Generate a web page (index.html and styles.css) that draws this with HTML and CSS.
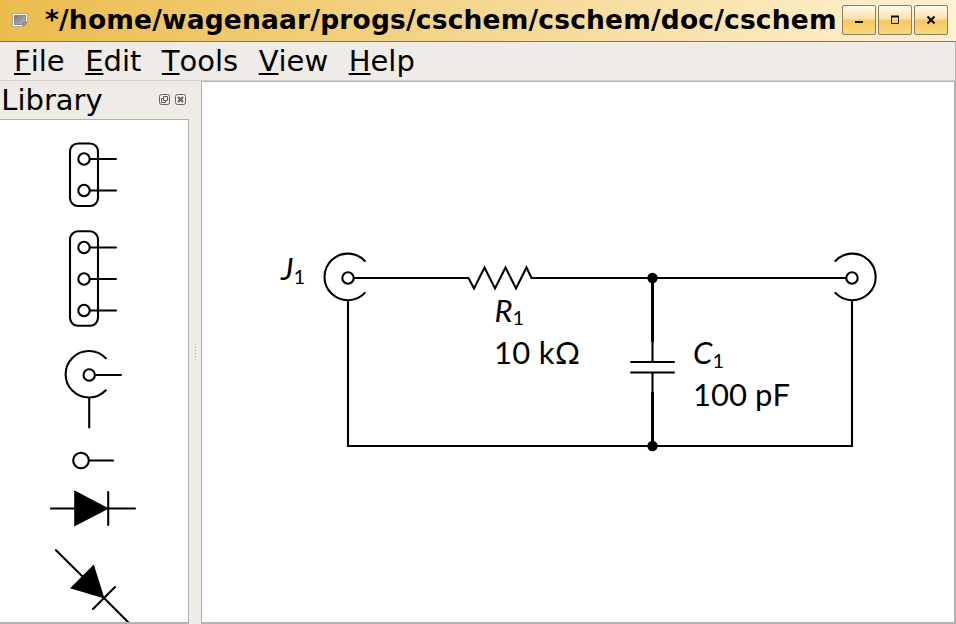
FILE: index.html
```html
<!DOCTYPE html>
<html lang="en">
<head>
<meta charset="utf-8">
<title>cschem</title>
<link rel="stylesheet" href="styles.css">
</head>
<body>
<div class="window">
  <header class="titlebar">
    <svg class="app-icon" width="16" height="14" viewBox="0 0 16 14"><defs><linearGradient id="ig" x2="1" y2="1"><stop stop-color="#777"/><stop offset="1" stop-color="#bbb"/></linearGradient></defs><path d="M.5.5h15v9l-4 4h-11z" fill="#f5f5f5" stroke="#aaa"/><path d="M2.500 2.500h11v6.500l-3 2.500h-8z" fill="url(#ig)" stroke="#888"/><path d="M15 9.500l-4 3.500v-3z" fill="#ccc" stroke="#777"/></svg>
    <h1 class="title">*/home/wagenaar/progs/cschem/cschem/doc/cschem</h1>
    <div class="controls">
      <button class="control" aria-label="Minimize"><svg width="12" height="12" viewBox="0 0 12 12"><path d="M2 8h8" stroke="#111" stroke-width="2"/></svg></button>
      <button class="control" aria-label="Maximize"><svg width="12" height="12" viewBox="0 0 12 12"><path d="M2.500 2.500h7v7h-7z" fill="none" stroke="#222"/><path d="M2 2.500h8" stroke="#111" stroke-width="2"/></svg></button>
      <button class="control" aria-label="Close"><svg width="12" height="12" viewBox="0 0 12 12"><path d="M2.500 2.500l7 7m0-7l-7 7" stroke="#111" stroke-width="2.200"/></svg></button>
    </div>
  </header>
  <nav class="menubar">
    <span class="menu"><span class="key">F</span>ile</span>
    <span class="menu"><span class="key">E</span>dit</span>
    <span class="menu"><span class="key">T</span>ools</span>
    <span class="menu"><span class="key">V</span>iew</span>
    <span class="menu"><span class="key">H</span>elp</span>
  </nav>
  <div class="workspace">
    <aside class="library">
      <div class="dock-title">
        <span class="dock-name">Library</span>
        <svg class="dock-button" width="11" height="11" viewBox="0 0 11 11"><rect x=".5" y=".5" width="10" height="10" rx="2"/><path d="M4.500 2.500h4v4h-4zM4.500 4.500h-2v4h4v-2"/></svg>
        <svg class="dock-button" width="11" height="11" viewBox="0 0 11 11"><rect x=".5" y=".5" width="10" height="10" rx="2"/><path d="M3 3l5 5m0-5l-5 5" stroke-width="2"/></svg>
      </div>
      <svg class="parts" width="188" height="502" viewBox="0 120 188 502">
        <g class="ink">
          <rect x="70" y="143.500" width="28" height="62.500" rx="8"/>
          <circle cx="84" cy="159" r="5.700"/><path d="M90 159h26"/>
          <circle cx="84" cy="190.500" r="5.700"/><path d="M90 190.500h26"/>
          <rect x="70" y="231.300" width="28" height="94.500" rx="8"/>
          <circle cx="84" cy="247.500" r="5.700"/><path d="M90 247.500h26"/>
          <circle cx="84" cy="279" r="5.700"/><path d="M90 279h26"/>
          <circle cx="84" cy="310.500" r="5.700"/><path d="M90 310.500h26"/>
          <path d="M105.800 358.200A23.300 23.300 0 1 0 105.800 390.300M89.200 398v29.500M95 375h26"/>
          <circle cx="89.200" cy="375" r="5.700"/>
          <circle cx="81" cy="460.500" r="7.800"/><path d="M89 460.500h24"/>
          <path d="M51 508.500h25M108 508.500h27M108.200 492v33"/>
          <path d="M56 550.200L82 576M93 609l22-22M104 598l28 28"/>
        </g>
        <path d="M74.200 490.200v36.200l34.800-17.900zM93.800 564.500l-23.800 23.800 34.500 10.200z"/>
      </svg>
    </aside>
    <div class="splitter"><span class="grip"></span></div>
    <main class="canvas">
      <svg width="752" height="540" viewBox="202 82 752 540">
        <g class="ink">
          <path d="M364.800 261A23.300 23.300 0 1 0 364.800 292.900M835.400 261A23.300 23.300 0 1 1 835.400 292.900"/>
          <circle cx="348" cy="278" r="5.700"/><circle cx="852" cy="278" r="5.700"/>
          <path stroke-linejoin="miter" d="M354 278H468.500L474 288.500 484.500 267.500 495 288.500 505.500 267.500 516 288.500 526.500 267.500 531.500 278H846M348 301V446H852V301"/>
          <path d="M652.500 342v20M652.500 373v19"/>
          <path class="plate" d="M630.300 362h44.500M630.300 372.500h44.500"/>
          <path class="bus" d="M652.500 278v64M652.500 392v54"/>
        </g>
        <circle cx="652.500" cy="278" r="5.200"/><circle cx="652.500" cy="446" r="5.200"/>
        <g class="label">
          <text x="281" y="280" class="name">J</text><text x="293.500" y="284" class="sub">1</text>
          <text x="494.500" y="322" class="name">R</text><text x="512.500" y="325" class="sub">1</text>
          <text x="494" y="364" textLength="86">10 kΩ</text>
          <text x="693" y="364" class="name">C</text><text x="712.500" y="368" class="sub">1</text>
          <text x="693" y="406" textLength="97">100 pF</text>
        </g>
      </svg>
    </main>
  </div>
</div>
</body>
</html>
```
FILE: styles.css
```css
* { box-sizing: border-box; }
body { margin: 0; background: #efebe7; color: #000; font-family: "DejaVu Sans", sans-serif; font-kerning: none; }
.window { display: flex; flex-direction: column; width: 956px; height: 624px; overflow: hidden; }
.titlebar { display: flex; flex: none; align-items: center; height: 42px; padding: 0 8px 1px 12px; border-bottom: 1px solid #927638; background: linear-gradient(90deg, #ebbc4c, #fff1d4); }
.app-icon { flex: none; margin-right: 17px; }
.title { flex: 1; margin: 0; font-size: 26.500px; letter-spacing: 0.165px; line-height: 40px; font-weight: bold; white-space: nowrap; }
.controls { display: flex; flex: none; gap: 2px; }
.control { display: flex; align-items: center; justify-content: center; width: 34px; height: 30px; padding: 0; border: 1px solid #8d7d61; border-radius: 2px; background: linear-gradient(#fffaf0, #f9e2aa 45%, #f4c965 52%, #f9d778); }
.menubar { display: flex; flex: none; gap: 20.500px; height: 39px; padding-left: 14px; border-bottom: 1px solid #d2cecb; border-right: 1px solid #b5b1ae; font-size: 29px; line-height: 38px; }
.key { text-decoration: underline; text-decoration-thickness: 2px; text-underline-offset: 2px; text-decoration-skip-ink: none; }
.workspace { display: flex; flex: 1; min-height: 0; }
.library { display: flex; flex-direction: column; width: 189px; }
.dock-title { display: flex; flex: none; align-items: center; gap: 5px; height: 38px; padding: 0 3px 1px 0; font-size: 29px; }
.dock-name { flex: 1; padding-left: 1.300px; }
.dock-button { fill: none; stroke: #65625f; }
.parts { display: block; flex: none; width: 189px; height: 505px; border: solid #b4b1ae; border-width: 1px 1px 2px 0; background: #fff; }
.splitter { display: flex; align-items: center; justify-content: center; width: 12px; }
.grip { width: 1px; height: 17px; background: repeating-linear-gradient(#b5b1ae 0 1px, transparent 1px 3px); }
.canvas { flex: 1; height: 543px; border: solid #b4b1ae; border-width: 1px 2px 2px 1px; background: #fff; }
.canvas svg { display: block; }
.ink { fill: none; stroke: #000; stroke-width: 2.100; stroke-linecap: round; stroke-linejoin: round; }
.bus { stroke-width: 3; stroke-linecap: butt; }
.plate { stroke-linecap: butt; }
.label { font-family: Lato, sans-serif; font-size: 31px; }
.name { font-style: italic; }
.sub { font-size: 20px; }
```
